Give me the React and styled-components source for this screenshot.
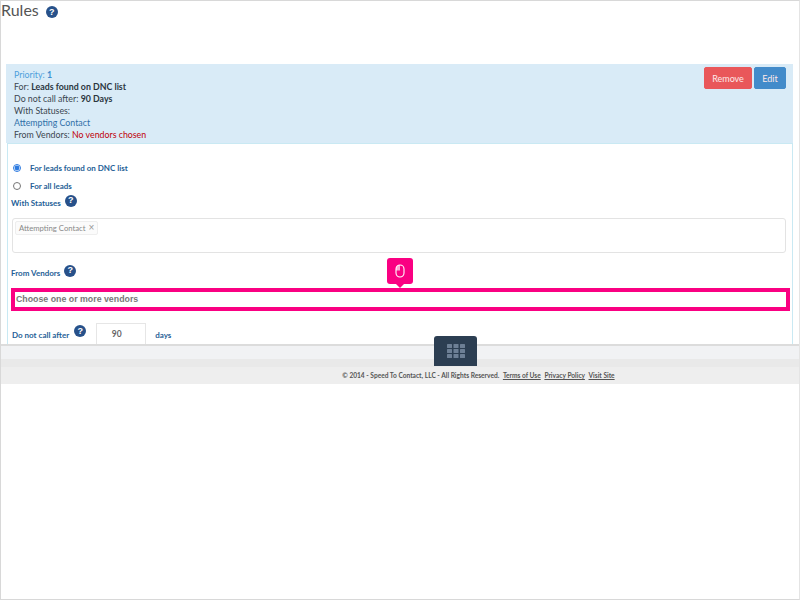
import React from "react";
import styled, { createGlobalStyle } from "styled-components";

const Global = createGlobalStyle`
  html, body { margin: 0; padding: 0; background: #fff; }
  * { box-sizing: border-box; }
  body { font-family: "Lato", "Open Sans", sans-serif; }
`;

const Frame = styled.div`
  width: 800px; height: 600px; border: 1px solid #d8d8d8; border-right-color: #e4e4e4;
  background: #fff; overflow: hidden; display: flex; flex-direction: column;
`;
const Viewport = styled.div`
  height: 343px; overflow: hidden; flex: none; position: relative;
`;
const TitleRow = styled.div`
  height: 63px; display: flex; align-items: flex-start; gap: 7px;
`;
const Title = styled.h1`
  margin: 0; font-size: 16px; line-height: 17px; font-weight: 400; color: #555;
`;
const HelpDot = styled.span`
  width: 12px; height: 12px; border-radius: 50%;
  background: #27518a; color: #fff; font: 700 9px/1 "Liberation Sans", sans-serif;
  display: inline-flex; align-items: center; justify-content: center; flex: none;
  margin-top: ${p => p.$top ?? 0}px;
  margin-left: ${p => p.$left ?? 0}px;
`;
const Panel = styled.section`
  margin: 0 6px 0 5px;
`;
const PanelHead = styled.header`
  height: 79px; background: #d9ebf7; padding: 3px 7px 0 8px;
  display: flex; justify-content: space-between; align-items: flex-start;
`;
const Summary = styled.div`
  font-size: 8.8px; line-height: 12px; color: #3b4650;
  padding-top: 2px;
`;
const Line = styled.div`
  color: ${p => p.$color || "inherit"};
  b { font-weight: 700; color: ${p => p.$bold || "#2b3640"}; }
`;
const Danger = styled.span`color: #c00008;`;
const Actions = styled.div`display: flex; gap: 2px;`;
const Btn = styled.button`
  height: 22px; width: ${p => p.$w}px; border: 1px solid ${p => p.$bg}; border-radius: 2px;
  background: ${p => p.$bg}; color: #fde9e9; font: 400 9px "Lato", sans-serif; padding: 0;
`;
const PanelBody = styled.div`
  border: 1px solid #c9e9f3; margin: 0 0 0 1px; padding: 18px 6px 0 6px; height: 240px;
`;
const RadioRow = styled.label`
  display: flex; align-items: center; height: 12px; margin-bottom: ${p => p.$mb || 6}px;
`;
const Radio = styled.input`
  margin: 0 9px 0 -1px; width: 8px; height: 8px; accent-color: #2d7be0; flex: none;
`;
const Label = styled.span`
  font-size: 8px; font-weight: 700; color: #1f5f97; line-height: 12px;
`;
const LabelRow = styled.div`
  display: flex; align-items: center; gap: 4px; height: 14px; margin: 4px 0 0 -3px;
`;
const TagBox = styled.div`
  height: 35px; border: 1px solid #e3e3e3; border-radius: 3px; padding: 2px;
  margin: 8px 0 13px -2px; display: flex; align-items: flex-start;
`;
const Tag = styled.span`
  height: 14px; border: 1px solid #eee; border-radius: 2px; background: #fbfbfb; color: #888;
  font-size: 7.7px; line-height: 12px; padding: 0 3px; display: inline-flex; align-items: center; gap: 3px;
`;
const TagX = styled.span`color: #999; font: 400 10px/1 "Liberation Sans", sans-serif;`;
const VendorInput = styled.div`
  height: 19px; margin: 5px 0 25px 0; display: flex; align-items: center; padding: 8px 0 0 2px;
  font: 700 8.8px "Liberation Sans", sans-serif; color: #777;
`;
const DaysRow = styled.div`display: flex; align-items: flex-start; margin-left: -2px;`;
const DaysInput = styled.div`
  width: 50px; height: 22px; margin: -6px 0 0 10px; border: 1px solid #e6e6e6; padding-right: 9px;
  text-align: center; font-size: 8.5px; font-weight: 700; color: #666; line-height: 20px;
`;
const Days = styled(Label)`margin-left: 9px;`;
const Highlight = styled.div`
  position: absolute; left: 10px; top: 287px; width: 779px; height: 23px; border: 4px solid #fa0082;
`;
const Pin = styled.div`
  position: absolute; left: 386px; top: 257px; width: 26px; height: 26px; background: #fa0082;
  border-radius: 3px; display: flex; align-items: center; justify-content: center;
  &::after { content: ""; position: absolute; left: 9px; bottom: -4px; border: 4px solid transparent;
    border-bottom: 0; border-top-color: #fa0082; }
`;
const Footer = styled.footer`flex: none; position: relative;`;
const Band = styled.div`height: 15px; background: #f1f2f4; border-top: 2px solid #dcdcdc;`;
const Stripe = styled.div`height: 8px; background: #e9e9e9;`;
const Legal = styled.div`
  height: 17px; background: #eee; padding: 2px 0 0 157px; text-align: center; font-size: 6.6px; line-height: 12px;
  font-weight: 700; color: #555; white-space: nowrap;
  a { color: #555; text-decoration: underline; margin-left: 2px; }
`;
const GridTab = styled.div`
  position: absolute; left: 433px; top: -8px; width: 43px; height: 30px; background: #2c3e52;
  border-radius: 3px 3px 0 0; display: flex; align-items: center; justify-content: center;
`;

const Cells = () => (
  <svg width="18" height="14" viewBox="0 0 18 14" fill="#6d7f95">
    {[0, 5, 10].map(y => [0, 6.5, 13].map(x => <rect key={x + "-" + y} x={x} y={y} width="5" height="4" rx=".5" />))}
  </svg>
);

const MouseIcon = () => (
  <svg width="10" height="14" viewBox="0 0 10 14" fill="none" stroke="#fff" strokeWidth="1.1">
    <rect x="1" y="1" width="8" height="12" rx="4" />
    <path d="M5 1a4 4 0 0 0-4 4v1.5h4z" fill="#fff" fillOpacity=".65" stroke="none" />
  </svg>
);

export default function App() {
  return (
    <Frame>
      <Global />
      <Viewport>
        <TitleRow>
          <Title>Rules</Title>
          <HelpDot $top={5}>?</HelpDot>
        </TitleRow>
        <Panel>
          <PanelHead>
            <Summary>
              <Line $color="#4f9fdc" $bold="#3f8fcf">Priority: <b>1</b></Line>
              <Line>For: <b>Leads found on DNC list</b></Line>
              <Line>Do not call after: <b>90 Days</b></Line>
              <Line>With Statuses:</Line>
              <Line $color="#2f6fa8">Attempting Contact</Line>
              <Line>From Vendors: <Danger>No vendors chosen</Danger></Line>
            </Summary>
            <Actions>
              <Btn $w={48} $bg="#e9575a">Remove</Btn>
              <Btn $w={32} $bg="#428bca">Edit</Btn>
            </Actions>
          </PanelHead>
          <PanelBody>
            <RadioRow>
              <Radio type="radio" name="scope" defaultChecked />
              <Label>For leads found on DNC list</Label>
            </RadioRow>
            <RadioRow $mb={2}>
              <Radio type="radio" name="scope" />
              <Label>For all leads</Label>
            </RadioRow>
            <LabelRow>
              <Label>With Statuses</Label>
              <HelpDot $top={-5}>?</HelpDot>
            </LabelRow>
            <TagBox>
              <Tag>Attempting Contact <TagX>×</TagX></Tag>
            </TagBox>
            <LabelRow>
              <Label>From Vendors</Label>
              <HelpDot $top={-5}>?</HelpDot>
            </LabelRow>
            <VendorInput>Choose one or more vendors</VendorInput>
            <DaysRow>
              <Label>Do not call after</Label>
              <HelpDot $top={-4} $left={5}>?</HelpDot>
              <DaysInput>90</DaysInput>
              <Days>days</Days>
            </DaysRow>
          </PanelBody>
        </Panel>
        <Highlight />
        <Pin><MouseIcon /></Pin>
      </Viewport>
      <Footer>
        <Band />
        <Stripe />
        <Legal>
          © 2014 - Speed To Contact, LLC - All Rights Reserved. <a>Terms of Use</a> <a>Privacy Policy</a> <a>Visit Site</a>
        </Legal>
        <GridTab><Cells /></GridTab>
      </Footer>
    </Frame>
  );
}
